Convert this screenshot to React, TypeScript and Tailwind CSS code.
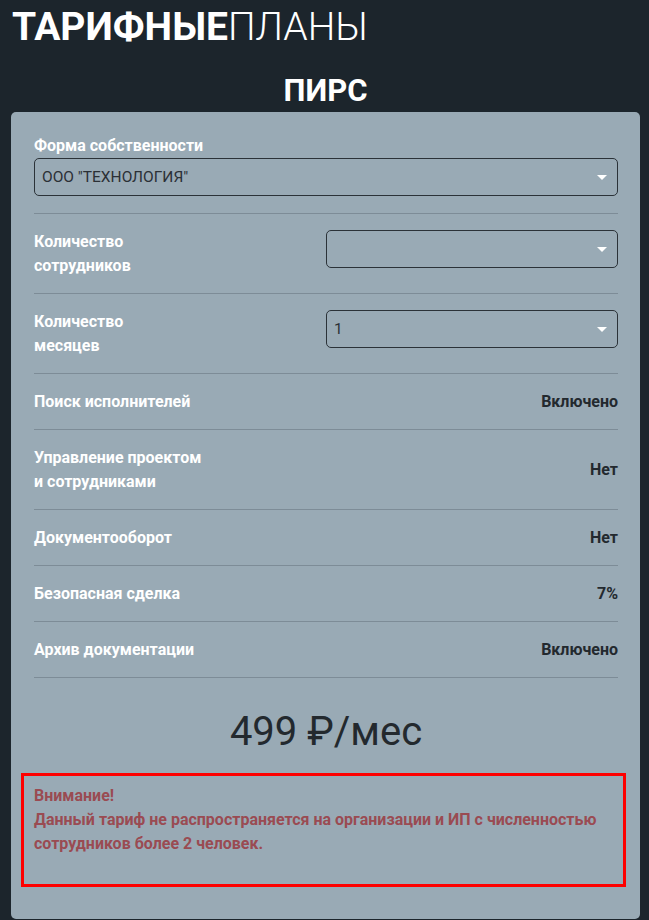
import React from 'react';

const rows: { label: React.ReactNode; value: string }[] = [
  { label: 'Поиск исполнителей', value: 'Включено' },
  { label: <>Управление проектом<br />и сотрудниками</>, value: 'Нет' },
  { label: 'Документооборот', value: 'Нет' },
  { label: 'Безопасная сделка', value: '7%' },
  { label: 'Архив документации', value: 'Включено' },
];

function Select({ value }: { value?: string }) {
  return (
    <div className="relative flex h-[38px] w-full items-center rounded-[5px] border border-[#2b3238] px-[7px] text-[15.5px] font-normal text-[#2b3036]">
      <span>{value}</span>
      <span className="absolute right-[10px] top-[16px] h-0 w-0 border-x-[5px] border-t-[5px] border-x-transparent border-t-white" />
    </div>
  );
}

export default function App() {
  return (
    <div
      className="min-h-screen bg-[#1c252c] pl-[11px] pr-[9px]"
      style={{ fontFamily: 'Roboto, "Noto Sans", sans-serif' }}
    >
      {/* Header */}
      <h1 className="pl-px text-[39px] leading-[55px] text-white">
        <span className="font-bold">ТАРИФНЫЕ</span>
        <span className="font-light">ПЛАНЫ</span>
      </h1>
      <h2 className="mt-[18px] text-center text-[31px] font-bold leading-[36px] text-white">ПИРС</h2>

      <div className="mt-[3px] rounded-[5px] bg-[#99aab5] pb-[32px] pl-[23px] pr-[22px] pt-[22px] text-[16px] font-bold leading-[24px]">
        {/* Ownership form */}
        <div className="border-b border-[#7d8c97] pb-[17px]">
          <div className="text-white">Форма собственности</div>
          <Select value={'ООО "ТЕХНОЛОГИЯ"'} />
        </div>

        <div className="grid grid-cols-2 border-b border-[#7d8c97] pb-[15px] pt-[16px]">
          <div className="text-white">Количество<br />сотрудников</div>
          <Select />
        </div>

        <div className="grid grid-cols-2 border-b border-[#7d8c97] pb-[15px] pt-[16px]">
          <div className="text-white">Количество<br />месяцев</div>
          <Select value="1" />
        </div>

        {rows.map((row, i) => (
          <div key={i} className="flex items-center justify-between border-b border-[#7d8c97] pb-[15px] pt-[16px]">
            <div className="text-white">{row.label}</div>
            <div className="text-[#23292e]">{row.value}</div>
          </div>
        ))}

        {/* Price */}
        <div className="mt-[30px] text-center text-[40px] font-normal leading-[48px] text-[#23292e]">499 ₽/мес</div>

        {/* Warning */}
        <div className="-ml-[13px] -mr-[8px] mt-[17px] border-[3px] border-[#ff0000] pb-[28px] pl-[10px] pt-[8px] text-[#9a4b52]">
          <div>Внимание!</div>
          <div>Данный тариф не распространяется на организации и ИП с численностью сотрудников более 2 человек.</div>
        </div>
      </div>
    </div>
  );
}
